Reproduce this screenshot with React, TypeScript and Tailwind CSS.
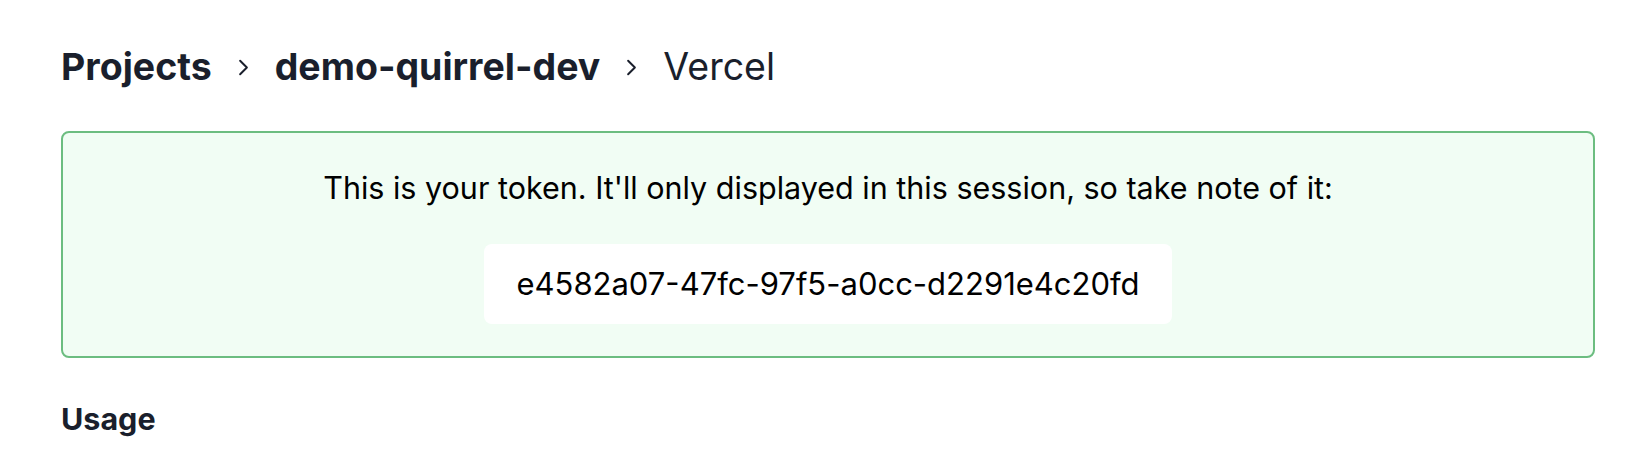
import { ChevronRight } from "lucide-react";

const crumbs = ["Projects", "demo-quirrel-dev"];

export default function App() {
  return (
    <div className="min-h-screen bg-white pt-[45px] pl-[61px] pr-[57px] font-['Inter',sans-serif] text-[#1a1f2c]">
      <nav className="flex items-center text-[37.5px] leading-[44px]">
        {crumbs.map((c) => (
          <span key={c} className="flex items-center">
            <span className="font-bold">{c}</span>
            <ChevronRight className="mx-[18px] h-[27px] w-[27px]" strokeWidth={1.75} />
          </span>
        ))}
        <span className="font-normal">Vercel</span>
      </nav>

      <div className="mt-[42px] flex flex-col items-center rounded-[8px] border-2 border-[#6cbd80] bg-[#f1fdf4] pt-[37px] pb-[32px]">
        <p className="text-[30.5px] leading-[36px] text-black">
          This is your token. It'll only displayed in this session, so take note of it:
        </p>
        <div className="mt-[38px] rounded-[8px] bg-white px-8 py-[22px] text-[31px] leading-[36px] text-black">
          e4582a07-47fc-97f5-a0cc-d2291e4c20fd
        </div>
      </div>

      <h2 className="mt-[43px] text-[30.5px] font-bold leading-[36px]">Usage</h2>
    </div>
  );
}
